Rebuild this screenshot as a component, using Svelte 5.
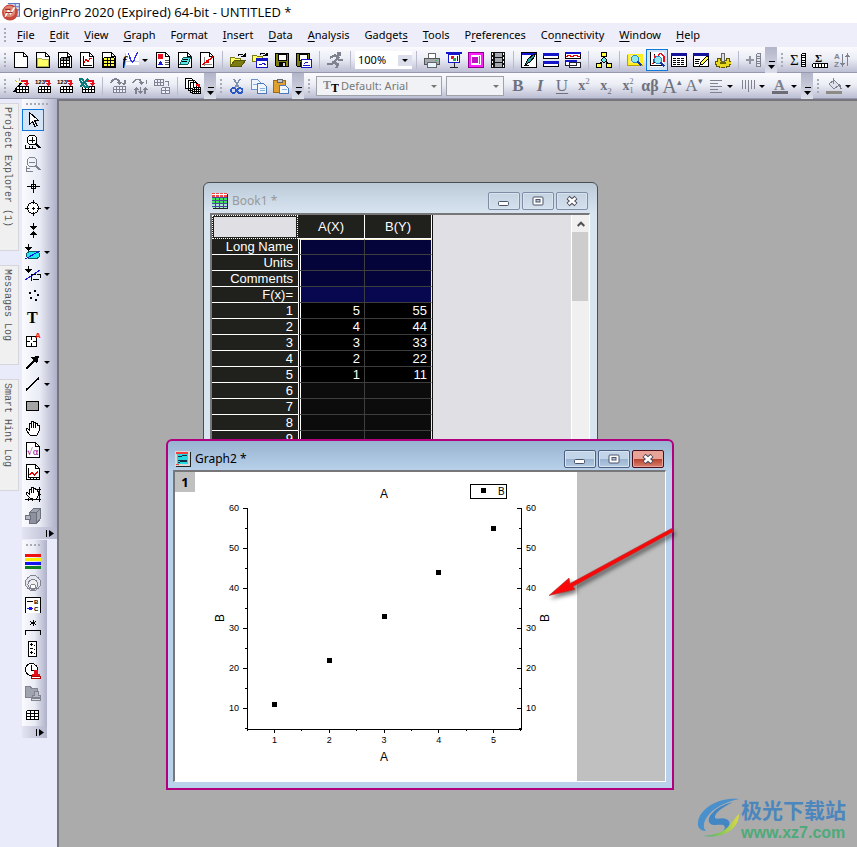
<script>
  const s = (d, c = '#000', w = 1) => `<path d="${d}" fill="none" stroke="${c}" stroke-width="${w}"/>`;
  const f = (d, c = '#000', o = 'none') => `<path d="${d}" fill="${c}" stroke="${o}"/>`;
  const t = (x, y, size, txt, c = '#000', extra = '') =>
    `<text x="${x}" y="${y}" font-size="${size}" fill="${c}" ${extra}>${txt}</text>`;
  const grid = (x, y, cols, rows, cw, ch, fill = '#fff', c = '#000') => {
    let d = '';
    for (let i = 0; i <= cols; i++) d += `M${x + i * cw} ${y}v${rows * ch}`;
    for (let j = 0; j <= rows; j++) d += `M${x} ${y + j * ch}h${cols * cw}`;
    return f(`M${x} ${y}h${cols * cw}v${rows * ch}h${-cols * cw}z`, fill) + s(d, c);
  };
  const page = f('M1.500 .5h9l4 4v11h-13z', '#fff', '#000') + s('M10.500 .5v4h4');
  const redArrow = s('M8 2.500h5.500v3', '#e8101c', 2) + f('M10 5h6l-3 3z', '#e8101c');
  const table = grid(3.5, 8.5, 4, 2, 3, 3);
  const lens = (x, y, c = '#2888c8') =>
    `<circle cx="${x}" cy="${y}" r="3.500" fill="#8fe8f0" stroke="${c}"/>` + s(`M${x + 2.5} ${y + 2.5}l4 4`, '#1838a0', 2);
  const floppy = (x = 0) =>
    f(`M${x + 1.5} 1.500h13v13h-12l-1-1z`, '#7c7c10', '#000') + f(`M${x + 4} 2h8v6h-8z`, '#fff', '#000') + f(`M${x + 5} 10h7v5h-7z`) + f(`M${x + 9} 11h2v3h-2z`, '#ddd');
  const G = '#80838f';

  const icons = {
    new: page,
    folder: page + f('M2.500 6.500h4l1 1h6v7h-11z', '#ffff66', '#b0b050'),
    book: page + f('M3 6h10v3h-10z', '#888') + grid(3.5, 5.5, 3, 3, 3, 3, 'none'),
    graph: page + s('M4.500 4v9.500h8.500') + s('M5 11l2-4 2 3 2-4 2 1', '#e00000', 1.2),
    matrix: page + grid(2.5, 5.5, 3, 3, 3.5, 3, '#ffff40'),
    func: f('M2 0h14v13h-14z', '#fff') + s('M2.500 1v12M2 9.500h14', '#c9ccd8') + s('M5 2c2 0 2 8 4.500 8s2.500-9 5.500-9', '#3030e8', 1.4) + t(-1, 14, 14, 'f', '#000', 'font-style="italic" font-weight="bold" font-family="Liberation Serif"'),
    layout: page + f('M3 2h5v5h-5z', '#e8101c') + f('M3 13c1 0 1-4 2.500-4s1.500 4 2.500 4z', '#1818d8') + s('M9.500 8.500h4M9.500 10.500h4M9.500 12.500h4', '#555'),
    notes: page + f('M3 12l3-6 8-1-3 7z', '#58e8e8', '#0a5a5a') + s('M6 8l5-1M5 10l5-1'),
    digit: page + s('M3 12.500h10M5.500 5v9', '#888') + s('M3 13l11-8', '#e00000', 1.4) + f('M7 8h3v3h-3z', '#e00000'),
    open: f('M.5 13.500v-8h4l1 1h5v2', '#ffff66', '#7a7a10') + f('M.5 14l4-5.500h11l-4 5.500z', '#7c7c10', '#55550a') + s('M8 3.500c1-2 4-2 5.500 0') + f('M11.500 4.500h4v-3.500z'),
    tmpl: f('M.5 9.500v-6h4l1 1h5v5z', '#ffff66', '#7a7a10') + s('M8 2.500c1-2 4-2 5.500 0') + f('M11.500 3.500h4v-3z') + f('M4.500 6.500h11v9h-11z', '#fff', '#1414c8') + f('M4 6h12v2.500h-12z', '#1414c8') + s('M7 12l2 1 2-2 3 2', '#1414c8'),
    save: floppy(),
    saveas: floppy(-1) + f('M5.500 7.500h10v8h-10z', '#fff', '#1414c8') + s('M7 13.500h7M8 12l2-2 2 1', '#1414c8'),
    run: f('M10 0h4v4h-4z', G) + s('M3 5.500l5-2 3 2-4 5 4 2-2 4M7 9l-2 3h-5M10 6l2 2h4', G, 2.4),
    print: f('M4 1h7l1 5h-8z', '#fff', '#666') + f('M.5 6.500h15v6h-15z', '#a4a7b0', '#555') + f('M3.500 10.500h9v5h-9z', '#e8f4ff', '#666') + f('M11 8h2v1h-2z', '#30d030'),
    slide: s('M0 1h16', '#1414c8', 2) + f('M2.500 2.500h11v8h-11z', '#fff', '#1414c8') + f('M5 4h3v3h-3z', '#e8101c') + f('M7 6h3v3h-3z', '#18b050') + s('M8.500 11v4M4 15.500h8M11.500 4v5', '#222'),
    image: f('M.5 .5h15v15h-15z', '#ff20ff', '#900090') + f('M3 3h10v10h-10z', '#fff') + `<circle cx="7" cy="8" r="3.500" fill="#c010c0"/>` + s('M11.500 4v8', '#ff20ff'),
    film: f('M1 0h14v16h-14z', '#111') + f('M4.500 1h7v4h-7zM4.500 6h7v4h-7zM4.500 11h7v4h-7z', '#a6a8b0') + s('M2.500 1v14M13.500 1v14', '#fff').replace('stroke-width', 'stroke-dasharray="2 2" stroke-width'),
    edit1: f('M.5 .5h15v15h-15z', '#fff', '#000') + f('M1 1h14v2h-14z', '#1414c8') + f('M4 13l3-6 6-5 1 2-5 6z', '#20a0a0', '#000') + s('M3 13.500h5'),
    tile: f('M.5 1.500h15v5h-15zM.5 9.500h15v5h-15z', '#fff', '#000') + f('M0 1h16v2.500h-16zM0 9h16v2.500h-16z', '#1414c8'),
    casc: f('M.5 .5h15v6h-15z', '#fff', '#000') + f('M0 0h16v2h-16z', '#1414c8') + s('M1 5l3-2 3 2 3-2 5 2', '#e00000') + f('M.5 8.500h11v5h-11zM4.500 10.500h11v5h-11z', '#fff', '#223') + s('M1 9h11', '#1414c8', 2),
    tree: s('M8 4v3M8 8L3.500 12M8 8l5 4') + f('M5.500 .5h5v4h-5z', '#ffff40', '#000') + f('M8 5l3 3-3 3-3-3z', '#60e8e8', '#000') + f('M.5 11.500h5v4h-5zM10.500 11.500h5v4h-5z', '#ffff40', '#000'),
    find: f('M0 2h16v12h-16z', '#ffef20') + s('M.5 2.500v11h15', '#b8a000') + f('M2 3h9v8h-9z', '#f4ec90') + lens(8, 7),
    findg: f('M1 0h14v15h-14z', '#fff') + s('M1.500 0v14M5.500 2v9M1 13.500h14') + s('M4 12l2-8 2 2 3-5 4 3v6', '#e8101c', 1.2) + lens(9, 8),
    lines: f('M.5 1.500h15v13h-15z', '#fff', '#000') + f('M0 1h16v3h-16z', '#14149a') + s('M2 6.500h12M2 8.500h12M2 10.500h12M2 12.500h12').replace('stroke-width', 'stroke-dasharray="3 1" stroke-width'),
    script: f('M.5 1.500h15v13h-15z', '#fff', '#000') + f('M0 1h16v3h-16z', '#14149a') + s('M2 7.500h5M2 9.500h4M2 11.500h4') + f('M7 13l1-3 6-6 2 2-6 6z', '#ffff40', '#000'),
    gear: f('M2 6h3v2h6v-2h3v3h2v3h-2v2h-3v2h-2v-1h-3v1h-2v-2h-3v-2h-1v-3h2z', '#e8d820', '#5c5400') + `<ellipse cx="8" cy="11" rx="3" ry="1.500" fill="#6c6400"/>` + f('M6.500 1.500h3v8h-3z', '#dcdfe6', '#666'),
    addcol: s('M0 8h8M4 4v8', '#9296a0', 2) + grid(10.5, 1.5, 1, 5, 4, 2.6, '#e4e6ee', G),
    sumcol: t(0, 13, 15, 'Σ', '#000', 'font-family="Liberation Serif"') + grid(11.5, 1.5, 1, 6, 4, 2.2),
    sumrow: t(3, 10, 11, 'Σ', '#000', 'font-family="Liberation Serif" font-weight="bold"') + grid(.5, 11.5, 5, 1, 3, 3.5),
    sort: t(0, 7, 8, 'A', G, 'font-weight="bold"') + t(0, 15, 8, 'Z', G, 'font-weight="bold"') + s('M8.500 2v12M13.500 2v12', G, 1) + f('M6 11h5l-2.500 4zM11 5h5l-2.500-4z', G),
    wiz: s('M1 14L8 5', '#000', 2) + s('M2 2l2 2M6 0v3M9 3l-2 2', '#c8b800') + redArrow + table,
    imp1: t(0, 6, 6, '123', '#000', 'font-weight="bold"') + s('M10 2.500h3.500v3', '#e8101c', 2) + f('M10.500 5h5.500l-2.700 3z', '#e8101c') + table,
    impx: table + s('M0 1h3l6 8h-3zM9 1l-8 8', '#0a7a7a', 2) + redArrow,
    re1: s('M1 5c2-5 8-5 8 0M14.500 2v4', G, 2) + f('M6 4h6l-3 3zM11.500 5h5l-2.500 3z', G) + grid(3.5, 8.5, 4, 2, 3, 3, '#eef', G),
    re2: s('M1 5c2-5 8-5 8 0M14.500 2v4M4 10v6M8.500 9v6M13 10v6', G, 1.5) + f('M6 4h6l-3 3zM1 12h6l-3-3zM6 13h5l-2.500 3zM10 12h6l-3-3z', G),
    clone: grid(.5, 1.5, 3, 2, 3, 3, '#eef', G) + grid(7.5, 9.5, 2, 2, 4, 3, '#eef', G) + s('M11 3.500h3v4', G),
    dup: f('M.5 .5h6l2 2v8h-8zM3.500 2.500h6l2 2v8h-8zM5.500 4.500h6l2 2v8h-8z', '#fff', '#000') + grid(7.5, 9.5, 4, 3, 2, 2) + s('M11 6.500h3v2', '#e8101c', 2),
    cut: s('M5 1l5 9M11 1l-5 9', '#8090b0', 1.6) + `<circle cx="4.500" cy="12.500" r="2.500" fill="none" stroke="#2858c8" stroke-width="1.500"/><circle cx="11" cy="12.500" r="2.500" fill="none" stroke="#2858c8" stroke-width="1.500"/>`,
    copy: f('M.5 1.500h6l3 3v7h-9z', '#eef5ff', '#6a94cc') + f('M6.500 5.500h6l3 3v7h-9z', '#eef5ff', '#4a78b8') + s('M2 6.500h4M8.500 10.500h5M8.500 12.500h5', '#8ab0dc'),
    paste: f('M.5 2.500h12v12h-12z', '#e0a030', '#9a6a18') + f('M4 1h5v3h-5z', '#c0c4cc', '#666') + f('M6.500 7.500h6l3 3v5h-9z', '#f2f7ff', '#4a78b8') + s('M8.500 11.500h5', '#8ab0dc'),
    left: s('M2 2.500h12M2 5.500h8M2 8.500h12M2 11.500h8M2 14.500h12', G, 1),
    vert: s('M2.500 2v9M5.500 2v9M8.500 2v12M11.500 2v9M14.500 2v9', G),
    fcol: t(2, 12, 15, 'A', G, 'font-weight="bold" font-family="Liberation Serif"') + f('M0 13h16v3h-16z', '#6c6c74'),
    bucket: f('M3 6l5-4 5 5-5 4z', '#e0e3ee', G) + s('M7.500 0v6M13 7c2 1 2 2 2 4', G, 1.5) + f('M0 13h16v3h-16z', '#8c8c84'),
    ptr: f('M4.500 .5v12l3-3 2.500 5 2-1-2.500-5h4z', '#fff', '#000'),
    zin: `<circle cx="7" cy="6" r="5" fill="#fff" stroke="#000"/>` + s('M4 6.500h6M7.500 3v6') + s('M10.500 9.500l5 4.500', '#000', 2) + s('M.5 11v3.500h10M4.500 14v-2M7.500 14v-2'),
    zout: `<circle cx="7" cy="6" r="5" fill="none" stroke="${G}"/>` + s('M4 6.500h6', G) + s('M10.500 9.500l5 4.500', G, 2) + s('M1.500 10v5.500h6M1 12.500h4', G),
    cross: s('M8.500 2v13M2 8.500h13') + f('M6.500 6.500h4v4h-4z', '#fff', '#000') + s('M8.500 6v5M6 8.500h5'),
    target: `<circle cx="8" cy="8" r="5.500" fill="#fff" stroke="#000"/>` + s('M8.500 0v4M8.500 12v4M0 8.500h4M12 8.500h4M7 8.500h3M8.500 7v3'),
    pair: s('M8.500 1v4M8.500 11v5') + f('M5 4h7l-3.500 4zM5 13h7l-3.500-4z'),
    msk: `<ellipse cx="8" cy="11" rx="7" ry="4" fill="#20e8f0" stroke="#0a5a60"/>` + s('M0 15l15-8', '#1414e0') + s('M3.500 0v4') + f('M0 3h7l-3.500 4z'),
    dmk: s('M0 14l15-10', '#1414e0') + s('M6.500 15v-7h4M12 8.500h3v3M8 13.500h6') + s('M3.500 0v4') + f('M0 3h7l-3.500 4z'),
    dots: f('M4 4h2v2h-2zM9 2h2v2h-2zM12 6h2v2h-2zM5 9h2v2h-2zM10 11h2v2h-2z'),
    text: t(2, 13, 16, 'T', '#000', 'font-weight="bold" font-family="Liberation Serif"'),
    anno: f('M1.500 4.500h10v10h-10z', '#fff', '#000') + s('M6.500 4v4M6.500 11v4M1 9.500h4M8 9.500h4') + t(10, 6, 8, 'A', '#f01010', 'font-weight="bold"'),
    arrow: s('M1 15L10 6', '#000', 1.8) + f('M6 3.500l8-2-2 8z'),
    line: s('M1 14L14 2', '#000', 1.6),
    rect: f('M1.500 3.500h12v9h-12z', '#a4a4a4', '#000'),
    hand: f('M5 15l-4-5 1-2 2 2v-7h2v-2h2v1h2v1h2v2h2v6l-2 4z', '#fff', '#000') + s('M6.500 3v5M8.500 3v5M10.500 4v4'),
    eq: page + t(2, 13, 9, '√α', '#900090', 'font-family="DejaVu Sans"'),
    plot: page + s('M3.500 4v9.500h10M5.500 13v2M8.500 13v2M11.500 13v2') + s('M4 11l3-2 3 2 3-4', '#e00000', 1.4),
    hand2: f('M5 12l-4-4 1-2 2 2v-5h2v-2h2v1h2v1h2v2h1v5l-2 4z', '#fff', '#000') + s('M6.500 3v4M8.500 3v4M14.500 1v15M0 13.500h16M3.500 12v3M7.500 12v3M13 3.500h3M13 8.500h3'),
    cube: f('M4.500 4.500l4-4h7v10l-4 5h-7z', '#a0a4ae', '#6c707c') + f('M4.500 4.500h7v11h-7z', '#8e929e', '#6c707c') + f('M.5 7.500h5v4h-5z', '#b4b8c2', '#6c707c') + s('M11.500 4.500l4-4', '#6c707c'),
    bars: f('M0 1h16v3h-16z', '#f01010') + f('M0 5h16v3h-16z', '#f8f000') + f('M0 9h16v3h-16z', '#1414f0') + f('M0 13h16v3h-16z', '#108020'),
    rings: `<circle cx="8" cy="8" r="7.500" fill="#e4e6f0" stroke="${G}"/><circle cx="8" cy="9.500" r="5" fill="#eee" stroke="${G}"/><circle cx="8" cy="11.500" r="2.500" fill="#fff" stroke="${G}"/>`,
    bc: f('M.5 .5h15v15h-15z', '#fff') + s('M.5 16v-15.500h15v15.500M2 4.500h6') + s('M2 11.500h6', '#1414f0') + f('M4 10h3v3h-3z', '#1414f0') + t(9, 7, 6, 'B', '#000', 'font-weight="bold"') + t(9, 14, 6, 'C', '#000', 'font-weight="bold"'),
    star: s('M.5 16v-4.500h15v4.500M8.500 1v6M5 2.500l6 3M11 2.500l-6 3'),
    scale: f('M3.500 .5h8v15h-8z', '#fff', '#000') + s('M5 3.500h3M5 7.500h3M5 11.500h3M6.500 2v3M6.500 10v3M9.500 4v1M9.500 8v1M9.500 12v1'),
    clock: `<circle cx="6.500" cy="6.500" r="6" fill="#fff" stroke="#000"/>` + s('M6.500 2v5h4') + f('M9 7h4v4h2v2h-8v-2h2z', '#e01018') + f('M6.500 13.500h9v2h-9z', '#fff', '#a00'),
    fstamp: f('M.5 3.500v-2h5l1 2h6v9h-12z', '#a0a4ae', G) + f('M9 6h4v4h2v2h-8v-2h2z', '#b4b8c2', G) + f('M6.500 13.500h9v2h-9z', '#ddd', G),
    gridi: grid(1.5, 3.5, 3, 3, 4, 3, '#fff')
  };
  icons.imp2 = icons.imp1;

  const fileTools = ['new', 'folder', 'book', 'graph', 'matrix', 'func*', 'layout', 'notes', 'digit', '|', 'open', 'tmpl', 'save', 'saveas', '|', 'run', '|'];
  const viewTools = ['|', 'print', 'slide', 'image', 'film', '|', 'edit1', 'tile', 'casc', '|', 'tree', '|', 'find', 'findg', 'lines', 'script', 'gear', '|', 'addcol'];
  const colTools = ['sumcol', 'sumrow', 'sort', '|'];
  const importTools = ['wiz', 'imp1', 'imp2', 'impx', '|', 're1', 're2', 'clone', '|', 'dup'];
  const clipTools = ['cut', 'copy', 'paste'];
  const sideTools = ['ptr', 'zin', 'zout', 'cross', 'target*', 'pair', 'msk*', 'dmk*', 'dots', 'text', 'anno', 'arrow*', 'line*', 'rect*', 'hand', 'eq*', 'plot*', 'hand2', 'cube'];
  const sideTools2 = ['bars', 'rings', 'bc', 'star', 'scale', 'clock', 'fstamp', 'gridi'];
  const active = ['findg', 'ptr'];

  const menus = [['', 'F', 'ile'], ['', 'E', 'dit'], ['', 'V', 'iew'], ['', 'G', 'raph'], ['F', 'o', 'rmat'], ['', 'I', 'nsert'], ['', 'D', 'ata'], ['', 'A', 'nalysis'], ['Gadget', 's', ''], ['', 'T', 'ools'], ['P', 'r', 'eferences'], ['Co', 'n', 'nectivity'], ['', 'W', 'indow'], ['', 'H', 'elp']];
  const panels = [['Project Explorer (1)', 148], ['Messages Log', 100], ['Smart Hint Log', 112]];

  const meta = ['Long Name', 'Units', 'Comments', 'F(x)='];
  const data = [[5, 55], [4, 44], [3, 33], [2, 22], [1, 11]];
  const rows = Array.from({ length: 12 }, (_, i) => data[i] ?? ['', '']);

  const px = (v) => 99.5 + (v - 1) * 54.75;
  const py = (v) => 36.5 + (60 - v) * 4;
  const yTicks = [60, 50, 40, 30, 20, 10];
  const yMinor = [55, 45, 35, 25, 15, 5];
  const xTicks = [1, 2, 3, 4, 5];
  const xMinor = [0.5, 1.5, 2.5, 3.5, 4.5, 5.5];
</script>

{#snippet tools(list)}
  {#each list as item}
    {#if item === '|'}
      <span class="sep"></span>
    {:else}
      {@const name = item.replace('*', '')}
      <button class="tool" class:drop={item.endsWith('*')} aria-label={name}>
        <span class="face" class:active={active.includes(name)}>
          <svg width="16" height="16" viewBox="0 0 16 16" shape-rendering="crispEdges">{@html icons[name]}</svg>
        </span>
        {#if item.endsWith('*')}<i class="caret"></i>{/if}
      </button>
    {/if}
  {/each}
{/snippet}

{#snippet over()}
  <button class="over" aria-label="More buttons"><svg width="7" height="8" viewBox="0 0 7 8"><path d="M1 .5h6" stroke="#000" /><path d="M0 4h7l-3.500 4z" /></svg></button>
{/snippet}

{#snippet winButtons()}
  <div class="winbtns">
    <button aria-label="Minimize"><svg width="14" height="12" viewBox="0 0 14 12"><rect x="1.5" y="6.500" width="10" height="4" rx="1" fill="#fff" stroke="#4a5268" /></svg></button>
    <button aria-label="Maximize"><svg width="14" height="12" viewBox="0 0 14 12"><rect x="2" y="2" width="10" height="8" rx="1" fill="#fff" stroke="#4a5268" /><rect x="5" y="4.500" width="4" height="2.500" fill="#b8c8dc" stroke="#4a5268" /></svg></button>
    <button class="close" aria-label="Close"><svg width="14" height="12" viewBox="0 0 14 12"><path d="M3 2.500l8 7M11 2.500l-8 7" stroke="#4a4658" stroke-width="4.500" /><path d="M3.500 3l7 6M10.500 3l-7 6" stroke="#fff" stroke-width="2.500" /></svg></button>
  </div>
{/snippet}

<div class="app">
  <header class="title">
    <svg width="18" height="18" viewBox="0 0 17 17">
      <path d="M5.500.5h11v12h-5" fill="#d4e0f8" stroke="#5878c8" /><path d="M9 3.500h7M9 6.500h7M12.500 1v11" stroke="#5878c8" />
      <circle cx="7.500" cy="9" r="7.500" fill="#c8483c" /><circle cx="7" cy="8" r="5.500" fill="#e08a78" />
      <path d="M3 13l3-6 2 3 4-6" fill="none" stroke="#fff" stroke-width="1.500" /><path d="M3 6h5M3 9h7" stroke="#a02820" />
    </svg>
    <span>OriginPro 2020 (Expired) 64-bit - UNTITLED *</span>
  </header>

  <nav class="menubar">
    <span class="grip"></span>
    {#each menus as [a, u, b]}<button>{a}<u>{u}</u>{b}</button>{/each}
  </nav>

  <div class="row">
    <div class="bar">
      <span class="grip"></span>
      {@render tools(fileTools)}
      <span class="combo zoom"><select aria-label="Zoom"><option>100%</option></select><i class="caret"></i></span>
      {@render tools(viewTools)}
    </div>
    {@render over()}
    <div class="bar grow"><span class="grip"></span>{@render tools(colTools)}</div>
  </div>

  <div class="row">
    <div class="bar"><span class="grip"></span>{@render tools(importTools)}</div>
    {@render over()}
    <div class="bar"><span class="grip"></span>{@render tools(clipTools)}</div>
    {@render over()}
    <div class="bar">
      <span class="grip"></span>
      <span class="combo font">
        <svg width="16" height="16" viewBox="0 0 16 16" font-weight="bold" font-size="12"><text x="0" y="11" fill="#888">T</text><text x="8" y="14">T</text></svg>
        <select aria-label="Font"><option>Default: Arial</option></select><i class="caret"></i>
      </span>
      <span class="combo size"><select aria-label="Font size"><option></option></select><i class="caret"></i></span>
      <button class="glyph"><b>B</b></button>
      <button class="glyph"><b><em>I</em></b></button>
      <button class="glyph"><u>U</u></button>
      <button class="glyph small">x<sup>2</sup></button>
      <button class="glyph small">x<sub>2</sub></button>
      <button class="glyph small both">x<span><i>2</i><i>1</i></span></button>
      <button class="glyph greek">αβ</button>
      <button class="glyph big">A<sup>▴</sup></button>
      <button class="glyph">A<sup>▾</sup></button>
      {@render tools(['left*', 'vert*', 'fcol*'])}
    </div>
    {@render over()}
    <div class="bar grow"><span class="grip"></span>{@render tools(['bucket*'])}</div>
  </div>

  <div class="body">
    <aside class="panels">
      {#each panels as [label, h]}<button style:height="{h}px">{label}</button>{/each}
    </aside>
    <div class="side">
      <div class="vbar">
        <span class="vgrip"></span>
        {@render tools(sideTools)}
        <button class="vover" aria-label="More tools"><svg width="8" height="7" viewBox="0 0 8 7"><path d="M.5 0v7" stroke="#000" /><path d="M3 0l5 3.500-5 3.500z" /></svg></button>
      </div>
      <div class="vbar narrow">
        <span class="vgrip"></span>
        {@render tools(sideTools2)}
        <button class="vover" aria-label="More tools"><svg width="8" height="7" viewBox="0 0 8 7"><path d="M.5 0v7" stroke="#000" /><path d="M3 0l5 3.500-5 3.500z" /></svg></button>
      </div>
    </div>

    <main class="mdi">
      <section class="win book">
        <div class="wtitle">
          <svg width="16" height="16" viewBox="0 0 16 16" shape-rendering="crispEdges"><rect x="1" y="1" width="15" height="15" fill="#222" /><rect width="15" height="15" fill="#fff" /><path d="M0 0h15v4H0z" fill="#f04848" /><path d="M0 5h15v5H0z" fill="#40e060" /><path d="M0 10h15v5H0z" fill="#a8e8d0" /><path d="M3.500 4v11M7.500 4v11M11.500 4v11M0 4.500h15M0 7.500h15M0 10.500h15M0 13.500h15" stroke="#5040a0" /><path d="M3.500 0v4M7.500 0v4M11.500 0v4M0 1.500h15" stroke="#fff" /></svg>
          <span>Book1 *</span>
          {@render winButtons()}
        </div>
        <div class="content">
          <table>
            <thead><tr><th class="corner"><div></div></th><th>A(X)</th><th>B(Y)</th></tr></thead>
            <tbody>
              {#each meta as m}
                <tr class="meta" class:fx={m === 'F(x)='}><th>{m}</th><td></td><td></td></tr>
              {/each}
              {#each rows as r, i}
                <tr class:empty={r[0] === ''}><th>{i + 1}</th><td>{r[0]}</td><td>{r[1]}</td></tr>
              {/each}
            </tbody>
          </table>
          <div class="scroll">
            <button aria-label="Scroll up"><svg width="8" height="6" viewBox="0 0 8 6"><path d="M.7 5l3.300-3.300 3.300 3.300" fill="none" stroke="#505050" stroke-width="2" /></svg></button>
            <div class="thumb"></div>
          </div>
        </div>
      </section>

      <section class="win graph">
        <div class="wtitle">
          <svg width="16" height="16" viewBox="0 0 16 16" shape-rendering="crispEdges"><rect x="1" y="1" width="15" height="15" fill="#222" /><rect width="15" height="15" fill="#d8d8d8" /><rect x="2" y="1" width="11" height="12" fill="#28d8e0" /><path d="M1 1.500h12" stroke="#f04040" stroke-width="2" /><path d="M3 6l4-1 5-1M3 9.500h9M3 12l4-2 5 1" stroke="#103048" fill="none" /><path d="M1 13.500h3" stroke="#f04040" /></svg>
          <span>Graph2 *</span>
          {@render winButtons()}
        </div>
        <div class="content">
          <div class="sheet">
            <button class="layer">1</button>
            <svg class="chart" width="402" height="308" viewBox="0 0 402 308">
              <g stroke="#000" fill="none" shape-rendering="crispEdges">
                <path d="M72.500 36v222M346.500 36v222M72 257.500h275" />
                {#each yTicks as v}<path d="M68 {py(v)}h5M342 {py(v)}h5" />{/each}
                {#each yMinor as v}<path d="M70 {py(v)}h3M344 {py(v)}h3" />{/each}
                {#each xTicks as v}<path d="M{px(v)} 257v4" />{/each}
                {#each xMinor as v}<path d="M{px(v)} 257v2" />{/each}
                <rect x="295.5" y="12.500" width="36" height="14" />
              </g>
              <g shape-rendering="crispEdges">
                {#each data as [x, y]}<rect x={Math.round(px(x) - 2.5)} y={Math.round(py(y) - 2.5)} width="5" height="5" />{/each}
                <rect x="306" y="16" width="5" height="5" />
              </g>
              <g font-size="9">
                {#each yTicks as v}
                  <text x="64" y={py(v) + 2.5} text-anchor="end">{v}</text>
                  <text x="351" y={py(v) + 2.5}>{v}</text>
                {/each}
                {#each xTicks as v}<text x={px(v)} y="271" text-anchor="middle">{v}</text>{/each}
                <text x="323" y="23" font-size="10">B</text>
              </g>
              <g font-size="12" text-anchor="middle">
                <text x="209" y="26">A</text>
                <text x="209" y="289">A</text>
                <text transform="translate(49 146) rotate(-90)">B</text>
                <text transform="translate(374 146) rotate(-90)">B</text>
              </g>
            </svg>
          </div>
        </div>
      </section>

      <svg class="pointer" width="136" height="80" viewBox="0 0 136 80">
        <path d="M3 69.500l20-17.500 1 5.500L125.500 2.500l2 3L27 60.500l2 3z" fill="#f80808" stroke="#a83838" stroke-width=".6" />
      </svg>

      <div class="mark">
        <svg width="44" height="42" viewBox="0 0 44 42">
          <defs><linearGradient id="leaf" x1="0" x2="1"><stop offset="0" stop-color="#3fae78" /><stop offset="1" stop-color="#d8dc40" /></linearGradient></defs>
          <path d="M42 2C22 0 3 11 1 25c-1 6 3 9 8 9-3-3-3-8 1-14C16 11 28 5 42 2z" fill="#4a90cc" />
          <path d="M36 5C22 8 10 18 12 25c2 5 10 2 14 3 3 1 2 5-1 7 8-4 10-11 4-13-4-2-9 1-11-1-1-5 8-11 18-16z" fill="#4286c4" />
          <path d="M42 17c0 14-14 25-36 22 12-1 20-4 25-9 4-4 6-8 11-13z" fill="url(#leaf)" />
        </svg>
        <div><strong>极光下载站</strong><span>www.xz7.com</span></div>
      </div>
    </main>
  </div>
</div>

<style>
  :global(body) { overflow: hidden; }
  .app { height: 100vh; display: flex; flex-direction: column; background: #e9eafa; font: 12px/16px "Noto Sans", "Open Sans", sans-serif; color: #000; overflow: hidden; }
  button, select { font: inherit; color: inherit; background: none; border: 0; padding: 0; margin: 0; border-radius: 0; }
  svg { display: block; flex: none; font-family: "Liberation Sans", Arial, sans-serif; }
  .title { flex: none; height: 23px; background: #fff; display: flex; align-items: center; gap: 3px; padding-left: 2px; white-space: nowrap; font-family: "Open Sans", "Noto Sans", sans-serif; font-size: 13px; }
  .menubar { flex: none; height: 24px; display: flex; align-items: center; background: #eeeefb; font-size: 11px; white-space: nowrap; gap: 1px; }
  .menubar button { padding: 0 7px; }
  .menubar .grip { width: 9px; }
  u { text-underline-offset: 2px; }

  .row { flex: none; height: 26px; display: flex; background: #b9bbd0; overflow: hidden; }
  .bar { box-sizing: border-box; display: flex; align-items: center; flex: none; height: 26px; padding-top: 1px; border-bottom: 1px solid #9698b0; background: linear-gradient(#fbfbfe, #eceef6 45%, #bcbed3); }
  .bar.grow { flex: 1; }
  .grip { flex: none; width: 10px; height: 14px; background: repeating-linear-gradient(#a8aab4 0 2px, transparent 2px 4px) 4px 0 / 2px 14px no-repeat; }
  .sep { flex: none; width: 9px; height: 18px; background: linear-gradient(#b9bbcc, #b9bbcc) 4px 0 / 1px 18px no-repeat; }
  .tool { display: flex; align-items: center; flex: none; height: 22px; width: 22px; }
  .tool.drop { width: 32px; }
  .face { box-sizing: border-box; width: 22px; height: 22px; display: flex; align-items: center; justify-content: center; flex: none; }
  .face.active { border: 1px solid #1177d7; background: #d2e4f5; }
  .caret { flex: none; border: 3px solid transparent; border-top-color: #000; border-bottom: 0; }
  .over { box-sizing: border-box; flex: none; width: 12px; height: 26px; display: flex; align-items: flex-end; justify-content: center; padding-bottom: 4px; background: linear-gradient(#b2b4c8, #dcdeea); border-radius: 0 4px 0 0; }
  .combo { box-sizing: border-box; display: flex; align-items: center; flex: none; height: 18px; background: #fff; font-size: 11px; }
  .combo select { flex: 1; min-width: 0; appearance: none; outline: 0; }
  .zoom { width: 57px; padding-left: 3px; }
  .zoom .caret { outline: 4px solid #dcdfeb; background: #dcdfeb; margin-right: 4px; }
  .font, .size { height: 20px; border: 1px solid #a0a2aa; background: #f1f2f6; color: #777; }
  .font .caret, .size .caret { border-top-color: #777; margin-right: 4px; }
  .font { width: 126px; margin: 0 4px 0 2px; padding-left: 6px; gap: 2px; }
  .font svg { font-family: "Liberation Serif", serif; }
  .size { width: 58px; margin-right: 3px; }
  .glyph { flex: none; width: 22px; height: 22px; font: 17px/22px "Liberation Serif", serif; color: #6f727e; white-space: nowrap; }
  .glyph.small { font-size: 14px; font-weight: bold; }
  .glyph.greek { font-size: 16px; font-weight: bold; }
  .glyph.big { font-size: 20px; }
  .glyph sup, .glyph sub { font-size: 9px; line-height: 0; font-weight: normal; }
  .both { display: flex; align-items: center; justify-content: center; }
  .both span { display: flex; flex-direction: column; }
  .both i { font: 8px/9px "Liberation Serif", serif; }

  .body { flex: 1; min-height: 0; display: flex; }
  .panels { width: 19px; padding-top: 4px; margin-right: 3px; display: flex; flex-direction: column; gap: 14px; flex: none; }
  .panels button { box-sizing: border-box; width: 19px; background: #f0f0f1; border: 1px solid #d6d6da; border-left: 0; writing-mode: vertical-rl; text-align: left; font: 10px/14px "Liberation Mono", monospace; color: #555; padding: 3px 4px 0 0; white-space: nowrap; }
  .side { flex: none; width: 35px; display: flex; flex-direction: column; align-items: flex-start; gap: 1px; }
  .vbar { width: 35px; display: flex; flex-direction: column; background: linear-gradient(90deg, #fafbfe, #e9ebf5 50%, #aeb0c8); border-radius: 0 0 4px 4px; }
  .vbar.narrow { width: 25px; }
  .vgrip { height: 10px; background: repeating-linear-gradient(90deg, #a8aab4 0 2px, transparent 2px 4px) 4px 4px / 22px 2px no-repeat; }
  .narrow .vgrip { background-size: 14px 2px; }
  .vover { display: flex; align-items: center; justify-content: flex-end; height: 12px; padding-right: 3px; background: linear-gradient(90deg, #e2e4f2, #b4b6cc); }

  .mdi { flex: 1; position: relative; overflow: hidden; background: #ababab; border: solid #76767c; border-width: 2px 0 0 2px; }
  .win { position: absolute; box-sizing: border-box; display: flex; flex-direction: column; border-radius: 6px 6px 0 0; }
  .wtitle { flex: none; display: flex; align-items: center; font-size: 12px; gap: 4px; }
  .wtitle > span { flex: 1; }
  .winbtns { display: flex; gap: 2px; }
  .winbtns button { box-sizing: border-box; width: 32px; height: 18px; border: 1px solid #7f8ca6; border-radius: 2px; display: flex; align-items: center; justify-content: center; box-shadow: inset 0 0 0 1px #d8e4f0; }
  .content { flex: 1; display: flex; min-height: 0; border: solid; border-width: 2px 1px 1px 2px; border-color: #77777a #fff #fff #77777a; }

  .book { left: 144px; top: 81px; width: 395px; height: 330px; border: 1px solid #4a4e54; background: linear-gradient(#bccad8, #d8e4f0 30px, #d8e4f0); padding: 0 7px 7px 6px; }
  .book .wtitle { height: 30px; color: #999; padding: 6px 2px 0 2px; box-sizing: border-box; }
  .book .content { background: #e0dfe4; justify-content: space-between; }
  .graph { left: 107px; top: 338px; width: 508px; height: 351px; border: 2px solid #b1007f; background: linear-gradient(#98b3d0, #b9d1ea 30px, #b9d1ea); padding: 0 6px 6px 5px; }
  .graph .wtitle { height: 29px; padding: 6px 2px 0 2px; box-sizing: border-box; }
  .graph .content { background: #c0c0c0; }
  .graph .winbtns button { border-color: #4c5f80; background: linear-gradient(#c2d4e8 50%, #98b2d0 50%, #b4cae2); }
  .graph .winbtns .close { border-color: #4a1018; background: linear-gradient(#e8a498 50%, #b8422c 50%, #d88070); box-shadow: inset 0 0 0 1px #e8a498; }

  table { border-collapse: separate; border-spacing: 0; table-layout: fixed; width: 221px; height: max-content; font: 13px/15px "Liberation Sans", Arial, sans-serif; color: #fff; background: #20211d; border-right: 1px solid #111; }
  th, td { box-sizing: border-box; padding: 0 4px 0 0; font-weight: normal; text-align: right; height: 16px; overflow: hidden; white-space: nowrap; }
  thead th { height: 24px; text-align: center; border-right: 1px solid #fff; border-bottom: 1px solid #fff; background: #20211d; padding: 0; }
  thead th:first-child { width: 86px; }
  thead .corner { border: 1px dotted #fff; }
  .corner div { margin: 1px; height: 20px; background: #e0dfe4; }
  tbody th { border-bottom: 1px solid #fff; background: #20211d; padding-right: 5px; }
  td { background: #000; border-bottom: 1px solid #3e3e3e; }
  td:nth-child(2) { border-left: 3px double #fff; border-right: 1px solid #3e3e3e; }
  td:nth-child(3) { border-right: 1px solid #f4eecb; }
  .meta td { background: #04043a; }
  .meta.fx td { background: #080850; }
  .meta:first-child td { border-top: 1px solid #f4eecb; }
  .empty td { background: #0c0c0c; }
  .scroll { width: 17px; background: #f0f0f0; border-left: 1px solid #fff; display: flex; flex-direction: column; }
  .scroll button { height: 17px; display: flex; align-items: center; justify-content: center; }
  .thumb { height: 69px; background: #cdcdcd; margin-right: 1px; }

  .sheet { background: #fff; width: 402px; display: grid; }
  .sheet > * { grid-area: 1 / 1; }
  .layer { width: 20px; height: 20px; background: #c0c0c0; font: bold 13px/20px "Noto Sans", sans-serif; z-index: 1; }
  .pointer { position: absolute; left: 487px; top: 425px; filter: drop-shadow(2px 3px 2px #0008); }
  .mark { position: absolute; right: 11px; bottom: 5px; display: flex; align-items: center; gap: 0; }
  .mark div { display: flex; flex-direction: column; }
  .mark strong { font: bold 21px/30px "Noto Sans CJK SC", sans-serif; color: #4b86bd; }
  .mark span { font: bold 16px/18px "Liberation Sans", Arial, sans-serif; color: #4eaa78; }
</style>
